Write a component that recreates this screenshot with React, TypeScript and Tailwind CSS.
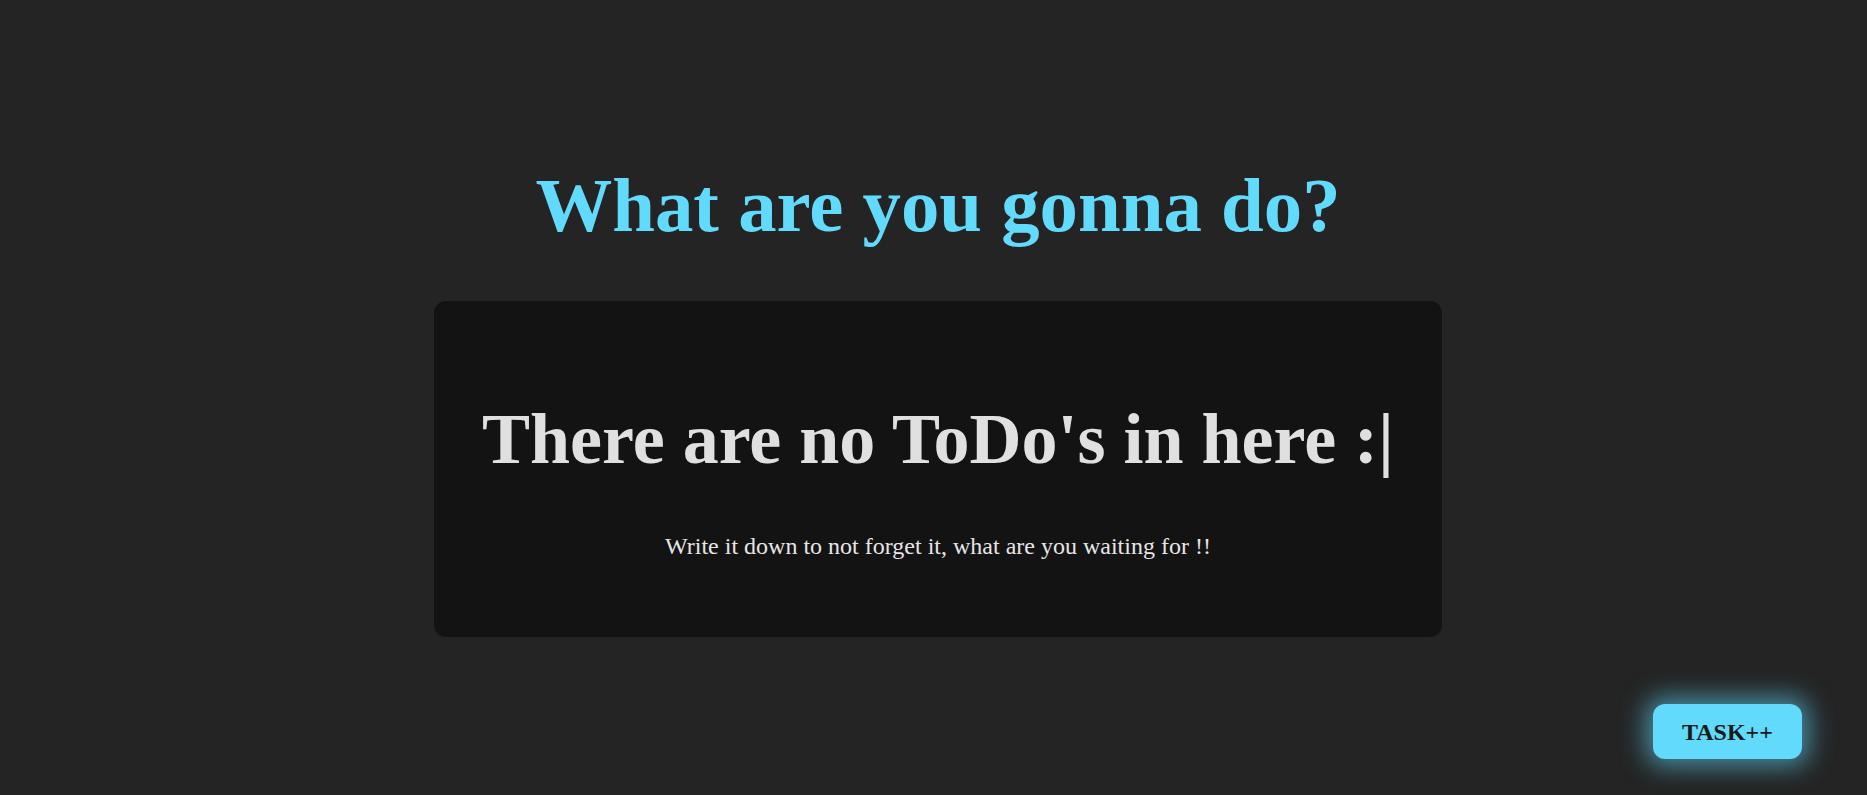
export default function App() {
  return (
    <div
      className="relative min-h-screen w-full bg-[#242424]"
      style={{ fontFamily: '"Liberation Serif", "Times New Roman", serif' }}
    >
      <main className="flex flex-col items-center pt-[162px] pl-[9px]">
        <h1 className="whitespace-nowrap text-[76.8px] leading-[88px] font-bold text-[#61dafb]">
          What are you gonna do?
        </h1>
        <section className="mt-[51px] flex w-[1008px] flex-col items-center rounded-xl bg-[#131313] pt-[96px] pb-[77px]">
          <h2 className="whitespace-nowrap text-[72px] leading-[84px] font-bold text-[#e0e0e0]">
            There are no ToDo's in here :|
          </h2>
          <p className="mt-[51px] text-[24px] leading-[28px] text-[#e6e6e6]">
            Write it down to not forget it, what are you waiting for !!
          </p>
        </section>
      </main>
      <button className="absolute right-[65px] bottom-[36px] h-[55px] w-[149px] rounded-xl bg-[#61dafb] text-[24px] font-bold text-[#1a1a1a] shadow-[0_0_24px_8px_rgba(97,218,251,0.55)]">
        TASK++
      </button>
    </div>
  );
}
